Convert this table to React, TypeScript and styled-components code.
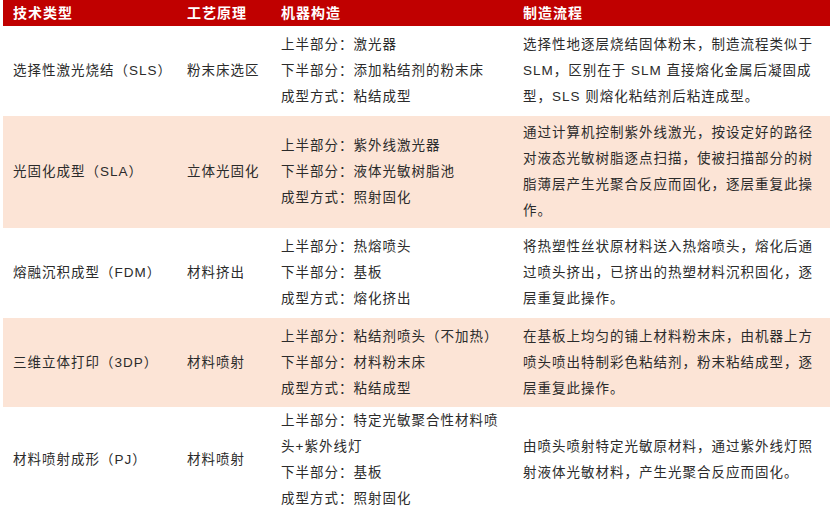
import React from "react";
import styled, { createGlobalStyle } from "styled-components";

const Global = createGlobalStyle`
  html, body { margin: 0; padding: 0; background: #ffffff; }
  body { font-family: "Liberation Sans", "Noto Sans CJK SC", sans-serif; }
`;

const Table = styled.div`
  width: 830px;
  padding-left: 3px;
  box-sizing: border-box;
  display: flex;
  flex-direction: column;
`;

const COLS = "174px 94px 242px 317px";

const HeaderRow = styled.div`
  display: grid;
  grid-template-columns: ${COLS};
  height: 26px;
  background: #c00000;
  align-items: center;
`;

const HeaderCell = styled.div`
  padding-left: 10px;
  color: #ffffff;
  font-size: 14px;
  font-weight: 700;
  letter-spacing: 1px;
  line-height: 26px;
`;

const Row = styled.div<{ $alt: boolean; $h: number }>`
  display: grid;
  grid-template-columns: ${COLS};
  height: ${(p) => p.$h}px;
  background: ${(p) => (p.$alt ? "#fce4d6" : "#ffffff")};
  flex-shrink: 0;
`;

const Cell = styled.div`
  display: flex;
  flex-direction: column;
  justify-content: center;
  padding-left: 10px;
  color: #2b2b2b;
  font-size: 13.5px;
  letter-spacing: 1px;
  line-height: 26px;
  white-space: nowrap;
`;

const Line = styled.div``;

type RowData = {
  type: string;
  principle: string;
  machine: string[];
  process: string[];
  h: number;
};

const rows: RowData[] = [
  {
    type: "选择性激光烧结（SLS）",
    principle: "粉末床选区",
    machine: ["上半部分：激光器", "下半部分：添加粘结剂的粉末床", "成型方式：粘结成型"],
    process: [
      "选择性地逐层烧结固体粉末，制造流程类似于",
      "SLM，区别在于 SLM 直接熔化金属后凝固成",
      "型，SLS 则熔化粘结剂后粘连成型。",
    ],
    h: 90,
  },
  {
    type: "光固化成型（SLA）",
    principle: "立体光固化",
    machine: ["上半部分：紫外线激光器", "下半部分：液体光敏树脂池", "成型方式：照射固化"],
    process: [
      "通过计算机控制紫外线激光，按设定好的路径",
      "对液态光敏树脂逐点扫描，使被扫描部分的树",
      "脂薄层产生光聚合反应而固化，逐层重复此操",
      "作。",
    ],
    h: 112,
  },
  {
    type: "熔融沉积成型（FDM）",
    principle: "材料挤出",
    machine: ["上半部分：热熔喷头", "下半部分：基板", "成型方式：熔化挤出"],
    process: [
      "将热塑性丝状原材料送入热熔喷头，熔化后通",
      "过喷头挤出，已挤出的热塑材料沉积固化，逐",
      "层重复此操作。",
    ],
    h: 90,
  },
  {
    type: "三维立体打印（3DP）",
    principle: "材料喷射",
    machine: ["上半部分：粘结剂喷头（不加热）", "下半部分：材料粉末床", "成型方式：粘结成型"],
    process: [
      "在基板上均匀的铺上材料粉末床，由机器上方",
      "喷头喷出特制彩色粘结剂，粉末粘结成型，逐",
      "层重复此操作。",
    ],
    h: 89,
  },
  {
    type: "材料喷射成形（PJ）",
    principle: "材料喷射",
    machine: ["上半部分：特定光敏聚合性材料喷", "头+紫外线灯", "下半部分：基板", "成型方式：照射固化"],
    process: ["由喷头喷射特定光敏原材料，通过紫外线灯照", "射液体光敏材料，产生光聚合反应而固化。"],
    h: 106,
  },
];

export default function App() {
  return (
    <>
      <Global />
      <Table>
        <HeaderRow>
          <HeaderCell>技术类型</HeaderCell>
          <HeaderCell>工艺原理</HeaderCell>
          <HeaderCell>机器构造</HeaderCell>
          <HeaderCell>制造流程</HeaderCell>
        </HeaderRow>
        {rows.map((r, i) => (
          <Row key={r.type} $alt={i % 2 === 1} $h={r.h}>
            <Cell>{r.type}</Cell>
            <Cell>{r.principle}</Cell>
            <Cell>
              {r.machine.map((m) => (
                <Line key={m}>{m}</Line>
              ))}
            </Cell>
            <Cell>
              {r.process.map((p) => (
                <Line key={p}>{p}</Line>
              ))}
            </Cell>
          </Row>
        ))}
      </Table>
    </>
  );
}
